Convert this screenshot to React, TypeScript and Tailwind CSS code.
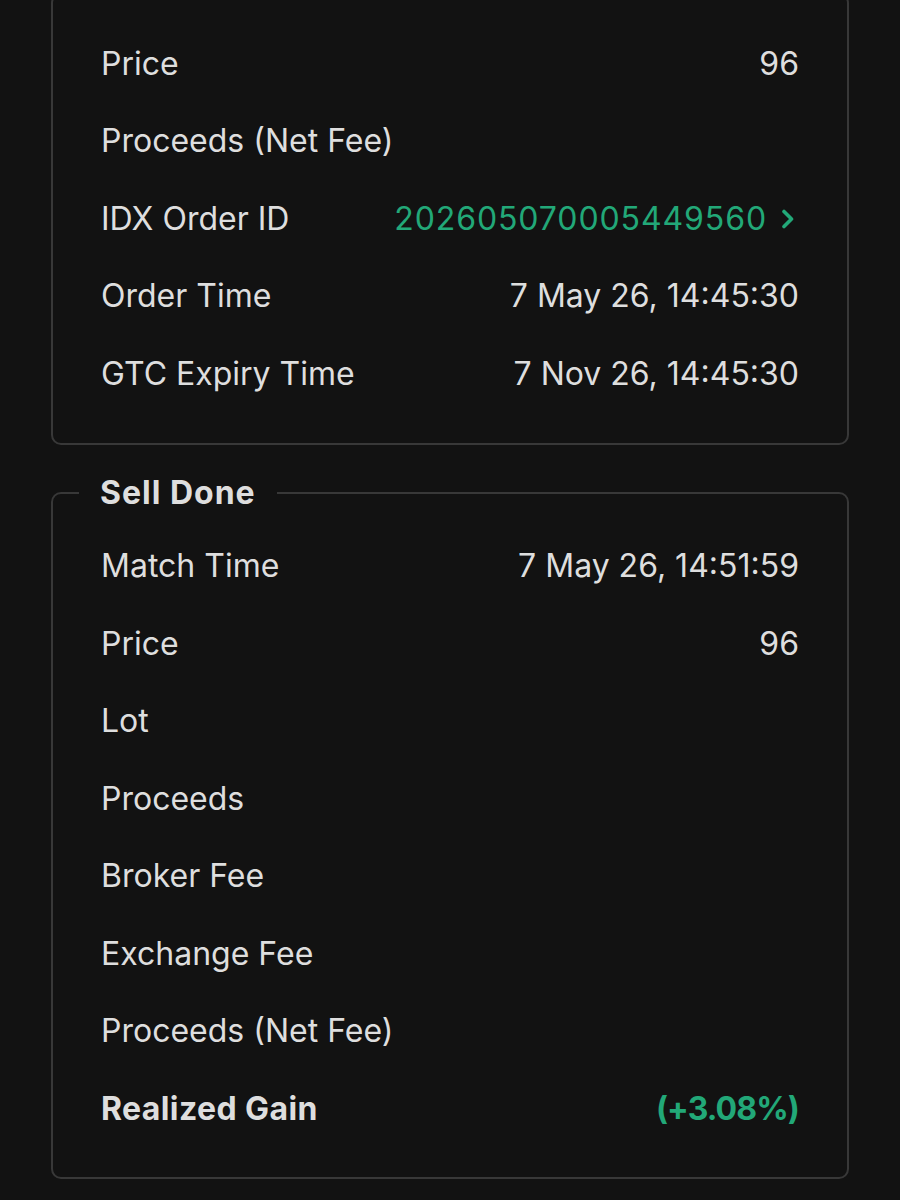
import React from "react";

type Row = { label: string; value?: string; tone?: "green"; bold?: boolean; link?: boolean };

const orderRows: Row[] = [
  { label: "Price", value: "96" },
  { label: "Proceeds (Net Fee)" },
  { label: "IDX Order ID", value: "202605070005449560", tone: "green", link: true },
  { label: "Order Time", value: "7 May 26, 14:45:30" },
  { label: "GTC Expiry Time", value: "7 Nov 26, 14:45:30" },
];

const doneRows: Row[] = [
  { label: "Match Time", value: "7 May 26, 14:51:59" },
  { label: "Price", value: "96" },
  { label: "Lot" },
  { label: "Proceeds" },
  { label: "Broker Fee" },
  { label: "Exchange Fee" },
  { label: "Proceeds (Net Fee)" },
  { label: "Realized Gain", value: "(+3.08%)", tone: "green", bold: true },
];

const Chevron = () => (
  <svg width="14" height="20" viewBox="0 0 14 20" className="ml-[14px] mr-[4px]">
    <polyline points="3,2.5 10.5,10 3,17.5" fill="none" stroke="#22a878" strokeWidth="3.6" strokeLinecap="round" strokeLinejoin="round" />
  </svg>
);

const DetailRow = ({ row }: { row: Row }) => (
  <div className="flex h-[77.5px] items-center justify-between">
    <span className={row.bold ? "font-bold tracking-[0.4px] text-[#dedede]" : "text-[#dedede]"}>{row.label}</span>
    {row.value && (
      <span
        className={`flex items-center ${row.tone === "green" ? "text-[#22a878]" : "text-[#dedede]"} ${row.bold ? "font-bold tracking-[-0.9px]" : ""} ${row.link ? "tracking-[0.9px]" : ""}`}
      >
        {row.value}
        {row.link && <Chevron />}
      </span>
    )}
  </div>
);

export default function App() {
  return (
    <div
      className="min-h-[1200px] w-[900px] overflow-hidden bg-[#121212] text-[32px]"
      style={{ fontFamily: "Inter, 'Noto Sans', sans-serif" }}
    >
      {/* Order detail card (top cut off) */}
      <div className="mx-[51px] mt-[-7px] rounded-[10px] border-2 border-[#383838] px-[48px] py-[30px]">
        {orderRows.map((r) => (
          <DetailRow key={r.label} row={r} />
        ))}
      </div>

      {/* Sell Done */}
      <fieldset className="mx-[51px] mt-[30px] rounded-[10px] border-2 border-[#383838] px-[48px] pt-[17px] pb-[29px]">
        <legend className="ml-[-22px] px-[21px] text-[32px] leading-[36px] font-bold tracking-[1px] text-[#dedede]">
          Sell Done
        </legend>
        {doneRows.map((r) => (
          <DetailRow key={r.label} row={r} />
        ))}
      </fieldset>
    </div>
  );
}
